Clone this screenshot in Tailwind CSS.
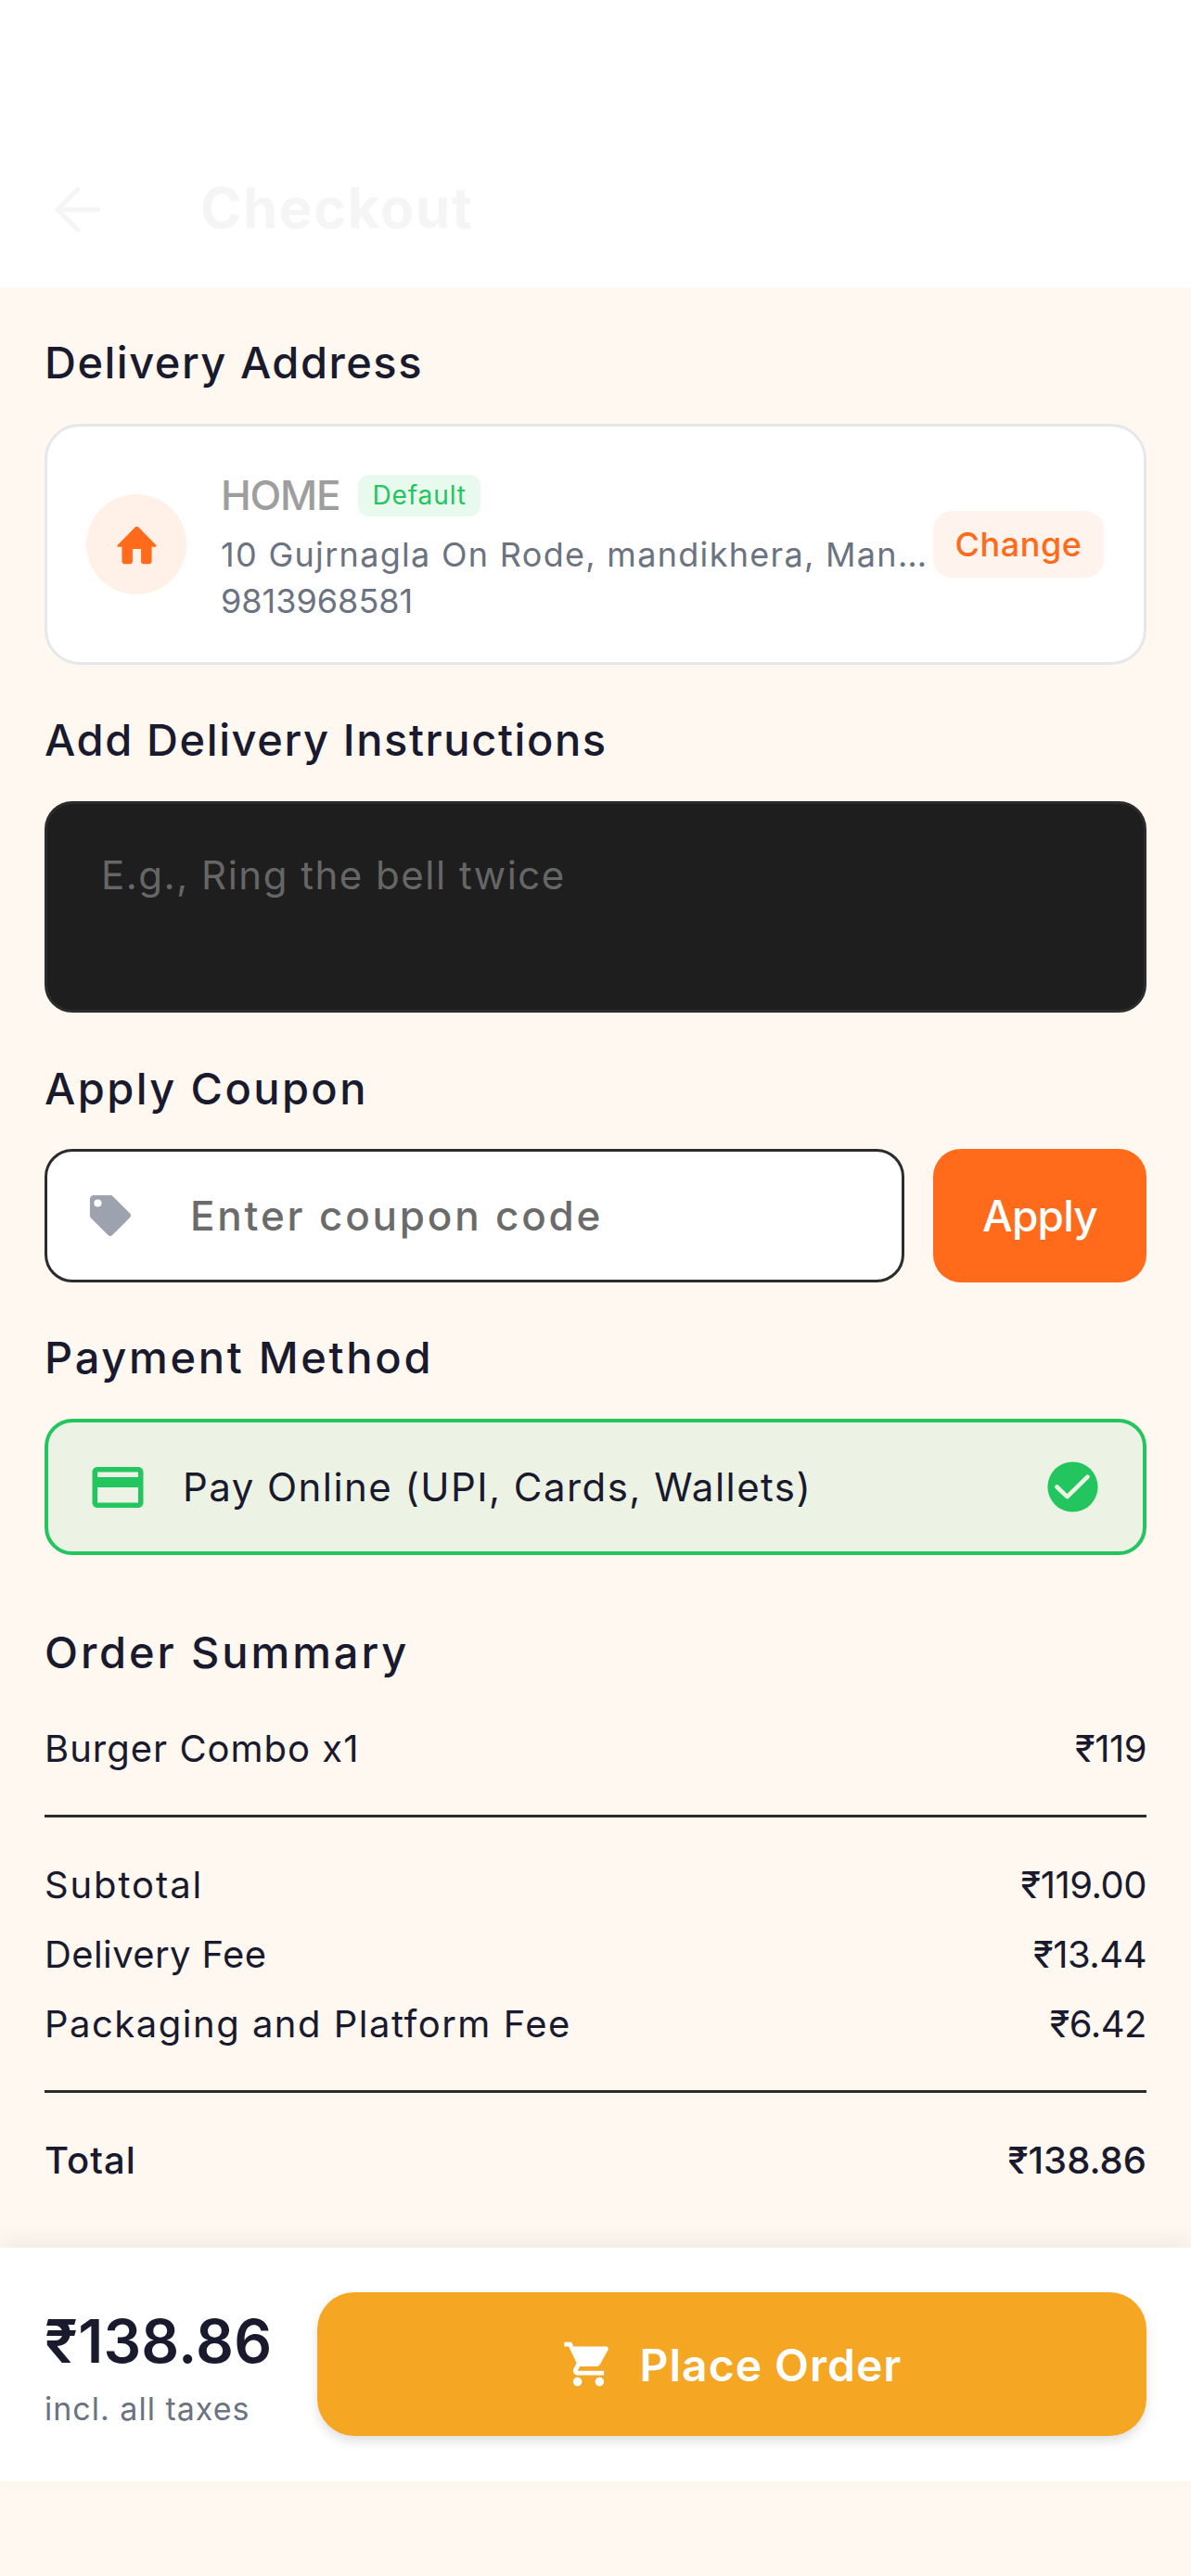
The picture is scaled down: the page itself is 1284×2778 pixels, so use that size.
<!DOCTYPE html>
<html lang="en">
<head>
  <meta charset="UTF-8">
  <title>Checkout</title>
  <script src="https://cdn.jsdelivr.net/npm/@tailwindcss/browser@4"></script>
</head>
<body class="bg-[#fff8f0] font-['Inter','Noto_Sans',sans-serif]">
  <div class="w-[1284px] h-[2778px] flex flex-col overflow-hidden">

    <!-- Header -->
    <div class="h-[310px] shrink-0 bg-white flex items-start pt-[194px] pl-[58px]">
      <svg class="mt-[6px] w-[52px] h-[52px] text-[#f5f5f5]" viewBox="0 0 52 52" fill="none" stroke="currentColor" stroke-width="5" stroke-linecap="round" stroke-linejoin="round"><path d="M4 26h44M4 26L26 4M4 26l22 22"/></svg>
      <span class="ml-[106px] text-[60px] leading-[60px] font-bold tracking-[1.5px] text-[#f5f5f5]">Checkout</span>
    </div>

    <div class="px-[48px] flex flex-col">
      <!-- Delivery address -->
      <h2 class="mt-[48px] h-[66px] text-[47px] leading-[66px] font-medium tracking-[1.5px] text-[#1a1a2e]">Delivery Address</h2>
      <div class="mt-[33px] h-[260px] bg-white border-[3px] border-[#e5e7eb] rounded-[38px] flex items-center pl-[42px] pr-[43px]">
        <div class="w-[108px] h-[108px] shrink-0 rounded-full bg-[#fff0e8] flex items-center justify-center">
          <svg class="w-[55px] h-[55px] text-[#ff6b1a]" viewBox="0 0 24 24" fill="currentColor"><path d="M10 20v-6h4v6c0 .5.4 1 1 1h3c.5 0 1-.5 1-1v-7h1.700c.5 0 .7-.6.3-.9L12.700 3.600c-.4-.3-1-.3-1.400 0L3 12.100c-.4.300-.2.900.300.900H5v7c0 .5.500 1 1 1h3c.6 0 1-.5 1-1z"/></svg>
        </div>
        <div class="ml-[37px] w-[766px] shrink-0 self-start mt-[50px]">
          <div class="flex items-center h-[48px]">
            <span class="text-[44px] leading-[48px] font-medium tracking-[-1.2px] text-[#9e9e9e]">HOME</span>
            <span class="ml-[20px] px-[15px] h-[45px] rounded-[12px] bg-[#e8f9ee] text-[28px] leading-[45px] tracking-[0.9px] text-[#22c55e]">Default</span>
          </div>
          <div class="mt-[17px] pr-[4px] text-[36px] leading-[46px] tracking-[1.3px] text-[#6b7280] truncate">10 Gujrnagla On Rode, mandikhera, Mandikhera</div>
          <div class="mt-[4px] text-[36px] leading-[46px] text-[#6b7280]">9813968581</div>
        </div>
        <div class="ml-auto w-[184px] h-[72px] rounded-[20px] bg-[#fff3ed] text-center text-[36px] leading-[72px] font-medium tracking-[0.6px] text-[#ff6b1a]">Change</div>
      </div>

      <!-- Instructions -->
      <h2 class="mt-[48px] h-[66px] text-[47px] leading-[66px] font-medium tracking-[1.6px] text-[#1a1a2e]">Add Delivery Instructions</h2>
      <div class="mt-[33px] h-[228px] bg-[#1e1e1e] border-[3px] border-[#2c2c2c] rounded-[30px] pl-[58px] pt-[47px] text-[42px] leading-[60px] tracking-[1.5px] text-[#666666]">E.g., Ring the bell twice</div>

      <!-- Coupon -->
      <h2 class="mt-[49px] h-[66px] text-[47px] leading-[66px] font-medium tracking-[2.4px] text-[#1a1a2e]">Apply Coupon</h2>
      <div class="mt-[32px] flex gap-[31px]">
        <div class="w-[927px] h-[144px] bg-white border-[3px] border-[#2c2c2c] rounded-[30px] flex items-center pl-[45px]">
          <svg class="w-[47px] h-[47px] text-[#9ca3af]" viewBox="0 0 52 52" fill="currentColor"><path fill-rule="evenodd" d="M6 1h19c1.500 0 2.500.5 3.500 1.500l20 20c1.800 1.800 1.800 3.700 0 5.500L28 48.500c-1.800 1.800-3.700 1.800-5.500 0l-20-20C1.500 27.500 1 26.500 1 25V6c0-3 2-5 5-5zm4.500 5a4.500 4.500 0 1 0 0 9 4.500 4.500 0 0 0 0-9z"/></svg>
          <span class="ml-[62px] text-[44px] font-medium tracking-[2.8px] text-[#6b6b6b]">Enter coupon code</span>
        </div>
        <div class="w-[230px] h-[144px] rounded-[30px] bg-[#ff6b1a] text-center text-[46px] leading-[144px] font-medium tracking-[-0.8px] text-white">Apply</div>
      </div>

      <!-- Payment -->
      <h2 class="mt-[48px] h-[66px] text-[47px] leading-[66px] font-medium tracking-[2.7px] text-[#1a1a2e]">Payment Method</h2>
      <div class="mt-[33px] h-[147px] bg-[#edf3e4] border-[4px] border-[#22c55e] rounded-[30px] flex items-center pl-[42px] pr-[43px]">
        <svg class="w-[66px] h-[66px] text-[#22c55e]" viewBox="0 0 24 24" fill="currentColor"><path d="M20 4H4c-1.110 0-2 .89-2 2v12c0 1.110.89 2 2 2h16c1.110 0 2-.89 2-2V6c0-1.110-.89-2-2-2zm0 14H4v-6h16v6zm0-10H4V6h16v2z"/></svg>
        <span class="ml-[37px] text-[42px] tracking-[1.45px] text-[#1a1a2e]">Pay Online (UPI, Cards, Wallets)</span>
        <svg class="ml-auto w-[65px] h-[65px]" viewBox="0 0 24 24"><circle cx="12" cy="12" r="10" fill="#22c55e"/><path d="M5.700 12l4.100 3.900 8.100-7.900" fill="none" stroke="#edf3e4" stroke-width="1.700" stroke-linecap="round" stroke-linejoin="round"/></svg>
      </div>

      <!-- Order summary -->
      <h2 class="mt-[72px] h-[66px] text-[47px] leading-[66px] font-medium tracking-[2.9px] text-[#1a1a2e]">Order Summary</h2>
      <div class="mt-[44px] flex justify-between text-[40px] leading-[54px] text-[#1a1a2e]"><span class="tracking-[1px]">Burger Combo x1</span><span class="tracking-[-0.5px]">₹119</span></div>
      <div class="mt-[44px] h-[3px] bg-[#2c2c2c]"></div>
      <div class="mt-[46px] flex flex-col gap-[21px] text-[40px] leading-[54px] text-[#1a1a2e]">
        <div class="flex justify-between"><span class="tracking-[1.9px]">Subtotal</span><span class="tracking-[-0.5px]">₹119.00</span></div>
        <div class="flex justify-between"><span class="tracking-[0.4px]">Delivery Fee</span><span class="tracking-[-0.5px]">₹13.44</span></div>
        <div class="flex justify-between"><span class="tracking-[1.5px]">Packaging and Platform Fee</span><span class="tracking-[-0.5px]">₹6.42</span></div>
      </div>
      <div class="mt-[44px] h-[3px] bg-[#2c2c2c]"></div>
      <div class="mt-[46px] flex justify-between text-[40px] leading-[54px] font-medium text-[#1a1a2e]"><span class="tracking-[1px]">Total</span><span>₹138.86</span></div>
    </div>

    <!-- Bottom bar -->
    <div class="mt-[67px] h-[252px] shrink-0 bg-white shadow-[0_-8px_24px_rgba(0,0,0,0.06)] flex items-start pt-[48px] px-[48px]">
      <div class="w-[294px] shrink-0 mt-[15px]">
        <div class="text-[64px] leading-[76px] font-semibold tracking-[0.2px] text-[#1a1a2e]">₹138.86</div>
        <div class="mt-[13px] text-[34px] leading-[44px] tracking-[1px] text-[#6b7280]">incl. all taxes</div>
      </div>
      <div class="w-[894px] h-[155px] rounded-[40px] bg-[#f5a623] shadow-[0_6px_12px_rgba(0,0,0,0.12)] flex items-center justify-center text-white">
        <svg class="w-[57px] h-[57px]" viewBox="0 0 24 24" fill="currentColor"><path d="M7 18c-1.100 0-1.990.9-1.990 2S5.900 22 7 22s2-.9 2-2-.9-2-2-2zM1 2v2h2l3.600 7.590-1.350 2.450c-.16.28-.25.61-.25.96 0 1.100.9 2 2 2h12v-2H7.420c-.14 0-.25-.11-.25-.25l.03-.12.9-1.630h7.450c.75 0 1.410-.41 1.750-1.030l3.580-6.490c.08-.14.12-.31.12-.48 0-.55-.45-1-1-1H5.210l-.94-2H1zm16 16c-1.100 0-1.990.9-1.990 2s.89 2 1.990 2 2-.9 2-2-.9-2-2-2z"/></svg>
        <span class="ml-[27px] mt-[2px] text-[48px] font-semibold tracking-[1px]">Place Order</span>
      </div>
    </div>
  </div>
</body>
</html>
